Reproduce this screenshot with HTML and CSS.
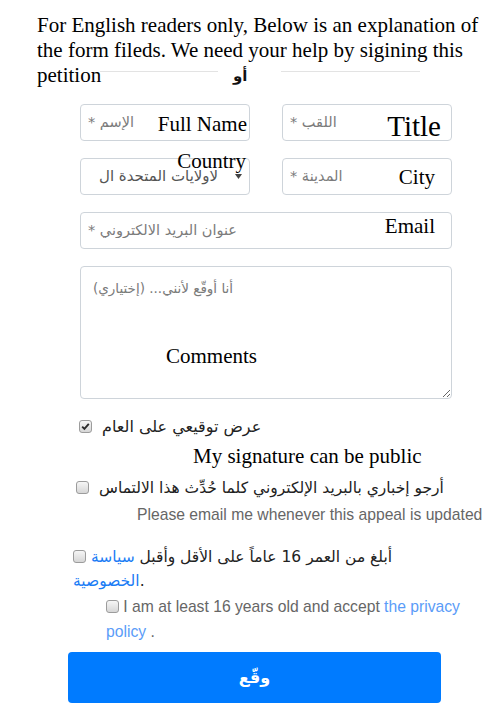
FILE: index.html
```html
<!DOCTYPE html>
<html lang="ar">
<head>
<meta charset="utf-8">
<title>Petition</title>
<link rel="stylesheet" href="styles.css">
</head>
<body>
<div class="page">
  <p class="intro">For English readers only, Below is an explanation of the form fileds. We need your help by sigining this petition</p>
  <div class="or-row">
    <span class="or-line or-left"></span>
    <span class="or" dir="rtl">أو</span>
    <span class="or-line or-right"></span>
  </div>
  <form class="fields">
    <div class="field">
      <input class="input" dir="rtl" type="text" placeholder="الإسم *">
      <span class="en en-name">Full Name</span>
    </div>
    <div class="field">
      <input class="input" dir="rtl" type="text" placeholder="اللقب *">
      <span class="en en-title">Title</span>
    </div>
    <div class="field">
      <div class="select">
        <span class="select-value" dir="rtl">لاولايات المتحدة ال</span>
        <svg class="arrow" width="7" height="5" viewBox="0 0 7 5"><path d="M0 0H7L3.5 5Z" fill="#444"/></svg>
      </div>
      <span class="en en-country">Country</span>
    </div>
    <div class="field">
      <input class="input" dir="rtl" type="text" placeholder="المدينة *">
      <span class="en en-city">City</span>
    </div>
    <div class="field wide">
      <input class="input" dir="rtl" type="email" placeholder="عنوان البريد الالكتروني *">
      <span class="en en-email">Email</span>
    </div>
    <div class="field wide">
      <textarea class="input textarea" placeholder="أنا أوقّع لأنني... (إختياري)"></textarea>
      <span class="en en-comments">Comments</span>
    </div>
  </form>

  <div class="check-row r1">
    <span class="cb checked"><svg width="11" height="11" viewBox="0 0 11 11"><path d="M2.2 5.6L4.4 7.8L8.8 2.8" fill="none" stroke="#2b2b2b" stroke-width="1.9"/></svg></span>
    <span class="ar-label" dir="rtl">عرض توقيعي على العام</span>
  </div>
  <div class="sig-en">My signature can be public</div>

  <div class="check-row r2">
    <span class="cb"></span>
    <span class="ar-label ar-small" dir="rtl">أرجو إخباري بالبريد الإلكتروني كلما حُدِّث هذا الالتماس</span>
  </div>
  <div class="note">Please email me whenever this appeal is updated</div>

  <p class="r3"><span class="cb inline"></span> <span dir="rtl">أبلغ من العمر 16 عاماً على الأقل وأقبل <a class="ar-link" href="#">سياسة الخصوصية</a></span>.</p>

  <p class="r4"><span class="cb inline"></span> I am at least 16 years old and accept <a class="en-link" href="#">the privacy policy</a> .</p>

  <button class="submit" type="button">وقّع</button>
</div>
</body>
</html>
```

FILE: styles.css
```css
body {
  margin: 0;
  background: #fff;
  font-family: "Liberation Sans", "DejaVu Sans", sans-serif;
  color: #212529;
}

.page {
  padding-top: 13px;
}

.intro {
  margin: 0 0 0 37px;
  width: 445px;
  font: 21px/1.2 "Liberation Serif", serif;
  color: #000;
}

.or-row {
  display: flex;
  align-items: flex-start;
  width: 320px;
  margin: -25.6px 0 0 100px;
}

.or-line {
  height: 1px;
  margin-top: 8px;
  background: #e3e3e3;
}

.or-left {
  width: 118px;
}

.or-right {
  width: 139px;
  margin-left: auto;
}

.or {
  margin: 5px 0 0 15px;
  font: bold 15px/16px "DejaVu Sans", sans-serif;
  color: #111;
}

.fields {
  display: grid;
  grid-template-columns: 170px 170px;
  column-gap: 32px;
  row-gap: 17px;
  width: 372px;
  margin: 20px 0 0 80px;
}

.wide {
  grid-column: 1 / -1;
}

.field {
  position: relative;
}

.input {
  display: block;
  width: 100%;
  height: 37px;
  box-sizing: border-box;
  margin: 0;
  padding: 0 7px;
  border: 1px solid #ced4da;
  border-radius: 4px;
  background: #fff;
  font: 14.5px "DejaVu Sans", sans-serif;
  color: #495057;
  text-align: left;
}

.input::placeholder {
  color: #7b7b7b;
}

.textarea {
  height: 133px;
  padding: 11px 12px;
  font-size: 13.5px;
  line-height: 20px;
  resize: vertical;
}

.select {
  display: flex;
  align-items: center;
  height: 37px;
  box-sizing: border-box;
  padding: 0 7px 0 18px;
  border: 1px solid #ced4da;
  border-radius: 4px;
  font: 15px "DejaVu Sans", sans-serif;
  color: #555;
}

.arrow {
  margin-left: auto;
}

.en {
  position: absolute;
  font: 21px/1 "Liberation Serif", serif;
  color: #000;
  white-space: nowrap;
  pointer-events: none;
}

.en-name {
  right: 3px;
  top: 10px;
}

.en-title {
  right: 11px;
  top: 8px;
  font-size: 29px;
}

.en-country {
  right: 4px;
  top: -7px;
}

.en-city {
  right: 17px;
  top: 9px;
}

.en-email {
  right: 17px;
  top: 4px;
}

.en-comments {
  left: 86px;
  top: 80px;
}

.cb {
  display: inline-flex;
  align-items: center;
  justify-content: center;
  flex: none;
  width: 13px;
  height: 13px;
  box-sizing: border-box;
  border: 1px solid #9c9c9c;
  border-radius: 3px;
  background: linear-gradient(#f6f6f6, #d6d6d6);
}

.cb.inline {
  vertical-align: -1px;
}

.check-row {
  display: flex;
  align-items: center;
  line-height: 20px;
}

.ar-label {
  margin-left: 10px;
  font: 16px/20px "DejaVu Sans", sans-serif;
  color: #222;
}

.ar-small {
  font-size: 15.5px;
}

.r1 {
  margin: 18px 0 0 79px;
}

.sig-en {
  margin: 8.6px 0 0 193px;
  font: 21px/1 "Liberation Serif", serif;
  color: #000;
}

.r2 {
  margin: 11.4px 0 0 76px;
}

.note {
  margin: 6.6px 0 0 137px;
  font: 15.7px/20px "Liberation Sans", sans-serif;
  color: #666;
}

.r3 {
  width: 360px;
  margin: 20.4px 0 0 73px;
  font: 15.5px/24px "DejaVu Sans", sans-serif;
  color: #222;
}

.ar-link {
  color: #1a7cf5;
  text-decoration: none;
}

.r4 {
  width: 374px;
  margin: 1.5px 0 0 106px;
  font: 15.7px/25px "Liberation Sans", sans-serif;
  color: #666;
}

.en-link {
  color: #5a9cf8;
  text-decoration: none;
}

.submit {
  display: block;
  width: 373px;
  height: 51px;
  margin: 7.5px 0 0 68px;
  border: 0;
  border-radius: 4px;
  background: #007bff;
  color: #fff;
  font: bold 16px "DejaVu Sans", sans-serif;
}
```
